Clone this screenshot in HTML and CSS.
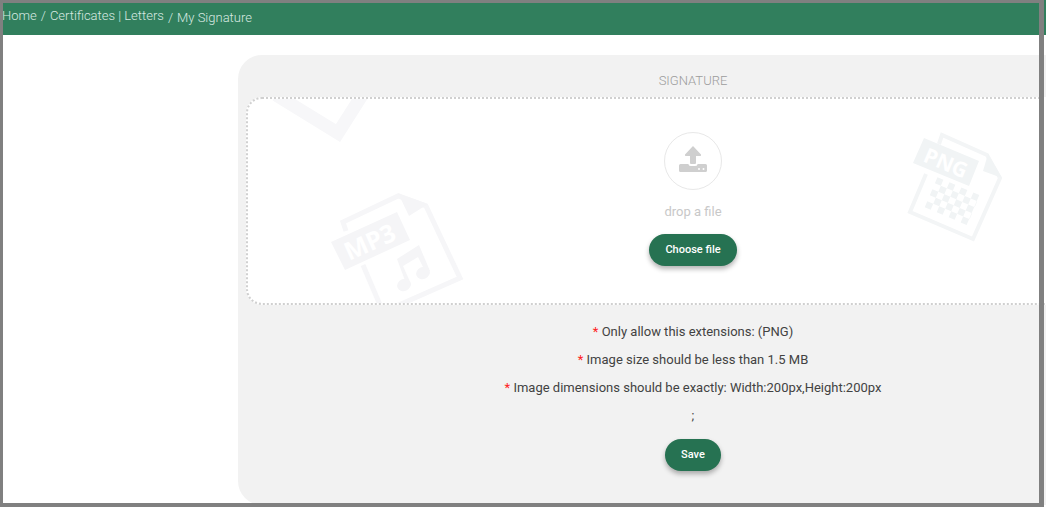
FILE: index.html
```html
<!DOCTYPE html>
<html lang="en">
<head>
<meta charset="utf-8">
<title>My Signature</title>
<link rel="stylesheet" href="styles.css">
</head>
<body>
<nav class="breadcrumb" aria-label="Breadcrumb">
  <a href="#">Home</a>
  <span>/</span>
  <a href="#">Certificates | Letters</a>
  <span class="current">/</span>
  <span class="current">My Signature</span>
</nav>
<main class="page">
  <form class="card">
    <h1 class="title">SIGNATURE</h1>
    <section class="dropzone">
      <svg class="art art-check" width="100" height="50" viewBox="0 0 100 50" aria-hidden="true">
        <path d="M24 -4L86 34L114 -10" fill="none" stroke="#f7f7f9" stroke-width="13"/>
      </svg>
      <svg class="art art-mp3" width="140" height="113" viewBox="330 190 140 113" aria-hidden="true">
        <g fill="none" stroke="#f6f6f8" stroke-width="5">
          <path d="M346 231L343 222L398 196L426 206L460 278L383 312L363 265"/>
        </g>
        <g fill="#f5f5f7">
          <path d="M398 193L428 204L409 216Z"/>
          <path d="M331 242L397 212L410 240L345 270Z"/>
          <ellipse cx="404" cy="285" rx="7" ry="6" transform="rotate(-24 404 285)"/>
          <ellipse cx="423" cy="273" rx="7" ry="6" transform="rotate(-24 423 273)"/>
          <path d="M397 259L419 245L430 271L426 273L418 257L403 266L411 284L407 286Z"/>
        </g>
        <text class="art-label" x="349" y="261" font-size="25" transform="rotate(-24 349 261)">MP3</text>
      </svg>
      <svg class="art art-png" width="100" height="116" viewBox="905 130 100 116" aria-hidden="true">
        <path d="M939 144L942 135L987 155L1000 178L973 239L910 212L926 174" fill="none" stroke="#f3f5f6" stroke-width="4"/>
        <path d="M924 138L979 161L969 186L913 163Z" fill="#f1f4f5"/>
        <path d="M988 154L1002 178L983 171Z" fill="#f1f4f5"/>
        <g transform="translate(938 181) rotate(23)" fill="none" stroke="#f1f4f5" stroke-width="6.500" stroke-dasharray="6.500">
          <path d="M-2 0H44M-2 13H44M-2 26H44M4.500 6.500H44M4.500 19.500H44"/>
        </g>
        <text class="art-label" x="922" y="161" font-size="21" transform="rotate(23 922 161)">PNG</text>
      </svg>
      <div class="upload">
        <svg width="28" height="27" viewBox="0 0 28 27" aria-hidden="true">
          <path d="M14 0L22 8.500Q22.500 10 21 10H17V17Q17 18 16 18H12Q11 18 11 17V10H7Q5.500 10 6 8.500Z" fill="#cfcfcf"/>
          <path d="M1.500 18H9.500V18.500Q10 20 12 20H16Q18 20 18.500 18.500V18H26.500Q28 18 28 19.500V24.500Q28 26 26.500 26H1.500Q0 26 0 24.500V19.500Q0 18 1.500 18Z" fill="#cfcfcf"/>
          <circle cx="20" cy="23" r="1" fill="#fff"/><circle cx="24.500" cy="23" r="1" fill="#fff"/>
        </svg>
      </div>
      <p class="hint">drop a file</p>
      <button class="button" type="button">Choose file</button>
    </section>
    <ul class="rules">
      <li><span class="star">*</span> Only allow this extensions: (PNG)</li>
      <li><span class="star">*</span> Image size should be less than 1.5 MB</li>
      <li><span class="star">*</span> Image dimensions should be exactly: Width:200px,Height:200px</li>
      <li>;</li>
    </ul>
    <button class="button" type="submit">Save</button>
  </form>
</main>
<div class="frame"></div>
</body>
</html>
```
FILE: styles.css
```css
* {
  box-sizing: border-box;
}

body {
  margin: 0;
  min-height: 100vh;
  overflow: hidden;
  background: #fff;
  font-family: Roboto, "Liberation Sans", sans-serif;
  color: #424242;
}

.breadcrumb {
  display: flex;
  gap: 4px;
  height: 35px;
  padding: 6px 2px;
  background: #317f5d;
  color: #d8e9e1;
  font-size: 13px;
  font-weight: 300;
  line-height: 20px;
}

.breadcrumb a {
  color: inherit;
  text-decoration: none;
}

.current {
  padding-top: 2px;
}

.page {
  overflow: hidden;
  padding: 20px 0 0 238px;
}

.card {
  display: flex;
  flex-direction: column;
  align-items: center;
  margin-right: -102px;
  padding: 16px 8px 34px;
  border-radius: 24px;
  background: #f2f2f2;
}

.title {
  margin: 0 0 6px;
  color: #9c9c9c;
  font-size: 13px;
  font-weight: 300;
  line-height: 20px;
}

.dropzone {
  position: relative;
  display: flex;
  flex-direction: column;
  align-items: center;
  align-self: stretch;
  overflow: hidden;
  padding: 33px 0 37px;
  border: 2px dotted #d0d0d0;
  border-radius: 16px;
  background: #fff;
}

.art {
  position: absolute;
}

.art-check {
  top: 0;
  left: 4px;
  overflow: visible;
}

.art-mp3 {
  bottom: 0;
  left: 82px;
}

.art-png {
  top: 31px;
  right: 133px;
}

.art-label {
  fill: #fff;
  font-family: "Open Sans", sans-serif;
  font-weight: 700;
}

.upload {
  display: flex;
  align-items: center;
  justify-content: center;
  width: 58px;
  height: 58px;
  padding-bottom: 4px;
  border: 1px solid #e8e8e8;
  border-radius: 50%;
  background: #fff;
}

.hint {
  margin: 12px 0;
  color: #c8c8c8;
  font-size: 13px;
  line-height: 20px;
}

.button {
  height: 32px;
  padding: 0 16px 2px;
  border: 0;
  border-radius: 16px;
  background: #267252;
  box-shadow: 0 3px 5px rgba(0, 0, 0, 0.3);
  color: #fff;
  font-family: inherit;
  font-size: 11px;
  font-weight: 500;
}

.rules {
  margin: 13px 0 9px;
  padding: 0;
  list-style: none;
  font-size: 13px;
  font-weight: 400;
  line-height: 28px;
  text-align: center;
}

.star {
  color: #f22;
}

.frame {
  position: absolute;
  inset: 0 2px 0 0;
  border: solid #808080;
  border-width: 3px 5px 4px 3px;
  pointer-events: none;
}
```
